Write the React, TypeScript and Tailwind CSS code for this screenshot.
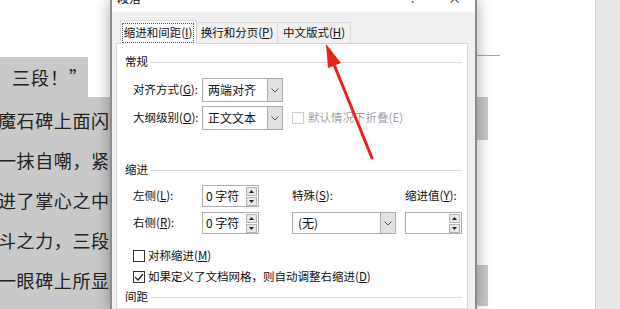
const U = ({ children }: { children: string }) => (
  <span className="underline underline-offset-[1px]">{children}</span>
);

const Chevron = () => (
  <svg width="8" height="5" viewBox="0 0 8 5">
    <path d="M0.5 0.5 L4 4 L7.5 0.5" fill="none" stroke="#555" strokeWidth="1" />
  </svg>
);

const Select = ({ value, className }: { value: string; className: string }) => (
  <div className={`flex h-full shrink-0 border border-[#adadad] bg-white ${className}`}>
    <div className="flex flex-1 items-center pl-[5px] text-[12px] text-[#111]">{value}</div>
    <div className="flex w-[15px] items-center justify-center border-l border-[#adadad] bg-[#e1e1e1]">
      <Chevron />
    </div>
  </div>
);

const SpinBtn = ({ up }: { up?: boolean }) => (
  <div className="flex h-[9px] w-[11px] items-center justify-center border border-[#b5b5b5] bg-[#e8e8e8]">
    <svg width="5" height="3" viewBox="0 0 5 3">
      <polygon points={up ? '0,3 2.5,0 5,3' : '0,0 2.5,3 5,0'} fill="#222" />
    </svg>
  </div>
);

const Spin = ({ value }: { value: string }) => (
  <div className="flex h-full w-[57px] shrink-0 border border-[#adadad] bg-white">
    <div className="flex flex-1 items-center pl-[3px] text-[12px] text-[#111] whitespace-nowrap">{value}</div>
    <div className="flex flex-col justify-center gap-[1px] pr-[1px]">
      <SpinBtn up />
      <SpinBtn />
    </div>
  </div>
);

const Section = ({ title, className }: { title: string; className: string }) => (
  <div className={`flex h-[16px] items-center ${className}`}>
    <span className="whitespace-nowrap">{title}</span>
    <div className="ml-[3px] h-px flex-1 bg-[#dcdcdc]" />
  </div>
);

const Check = ({ checked, disabled }: { checked?: boolean; disabled?: boolean }) => (
  <div
    className={`flex h-[12px] w-[12px] shrink-0 items-center justify-center border bg-white ${
      disabled ? 'border-[#cccccc]' : 'border-[#333]'
    }`}
  >
    {checked && (
      <svg width="10" height="8" viewBox="0 0 10 8">
        <path d="M1 4 L4 7 L9 1" fill="none" stroke="#222" strokeWidth="1.2" />
      </svg>
    )}
  </div>
);

const lines = ['魔石碑上面闪光，', '一抹自嘲，紧挨', '进了掌心之中，', '斗之力，三段！', '一眼碑上所显示'];

export default function App() {
  return (
    <div className="relative h-[309px] w-[620px] overflow-hidden bg-white font-['Noto_Sans_CJK_SC',sans-serif]">
      {/* document behind the dialog */}
      <div className="flex h-full text-[18px] tracking-[0.6px] text-[#222]">
        <div className="flex w-[112px] flex-col overflow-hidden">
          <div className="h-[57px]" />
          <div className="flex h-[40px]">
            <div className="flex w-[88px] items-center overflow-hidden bg-[#c9c9c9] pl-[12px] tracking-[1px] whitespace-nowrap">
              三段！”
            </div>
          </div>
          <div className="flex flex-1 flex-col bg-[#c9c9c9] pt-[3px]">
            {lines.map((t) => (
              <div key={t} className="-ml-[2px] flex h-[40px] items-center whitespace-nowrap">
                {t}
              </div>
            ))}
          </div>
        </div>
        <div className="w-[364px]" />
        <div className="flex w-[119px] flex-col">
          <div className="h-[55px]" />
          <div className="h-px w-[24px] bg-[#a8a8a8]" />
          <div className="h-[41px]" />
          <div className="flex h-[43px] w-[12px] items-center overflow-hidden bg-[#c9c9c9]">
            <span className="-ml-[14px]">，</span>
          </div>
          <div className="h-[125px]" />
          <div className="h-[41px] w-[12px] bg-[#c9c9c9]" />
        </div>
        <div className="flex-1 border-l border-[#d4d4d4] bg-[#e8e8e8]" />
      </div>

      {/* paragraph dialog */}
      <div className="absolute left-[110px] top-0 flex h-[309px] w-[367px] flex-col border-x-2 border-[#8c8c8c] bg-[#f0f0f0] text-[11.5px] text-[#111] shadow-[0_0_14px_rgba(0,0,0,0.35)]">
        <div className="flex h-[12px] items-start justify-between bg-white pl-[5px] pr-[14px] leading-none">
          <span className="-mt-[8px] text-[12px]">段落</span>
          <div className="-mt-[9px] flex gap-[32px] text-[13px] text-[#333]">
            <span>?</span>
            <span>×</span>
          </div>
        </div>

        <div className="flex h-[32px] items-end pl-[8px] whitespace-nowrap">
          <div className="relative z-10 flex h-[24px] w-[77px] items-center border-x border-t border-[#d9d9d9] bg-white pl-[1px]">
            <span className="flex h-[20px] w-[72px] items-center justify-center border border-dotted border-[#555]">
              缩进和间距(<U>I</U>)
            </span>
          </div>
          <div className="mb-[1px] flex h-[21px] w-[81px] items-center justify-center border-r border-t border-[#d9d9d9]">
            换行和分页(<U>P</U>)
          </div>
          <div className="mb-[1px] flex h-[21px] w-[73px] items-center justify-center border-r border-t border-[#d9d9d9]">
            中文版式(<U>H</U>)
          </div>
        </div>

        <div className="-mt-[1px] ml-[4px] mr-[7px] flex flex-1 flex-col border border-[#d9d9d9] bg-white pl-[8px] pr-[5px] whitespace-nowrap">
          <Section title="常规" className="mt-[10px]" />
          <div className="mt-[8px] flex h-[24px] items-center pl-[8px]">
            <span className="w-[69px] shrink-0">
              对齐方式(<U>G</U>):
            </span>
            <Select value="两端对齐" className="w-[81px]" />
          </div>
          <div className="mt-[4px] flex h-[24px] items-center pl-[8px]">
            <span className="w-[69px] shrink-0">
              大纲级别(<U>O</U>):
            </span>
            <Select value="正文文本" className="w-[81px]" />
            <div className="ml-[9px]">
              <Check disabled />
            </div>
            <span className="ml-[4px] text-[#a3a3a3]">默认情况下折叠(E)</span>
          </div>

          <Section title="缩进" className="mt-[32px]" />
          <div className="mt-[7px] flex h-[22px] items-center pl-[8px]">
            <span className="w-[69px] shrink-0">
              左侧(<U>L</U>):
            </span>
            <Spin value="0 字符" />
            <span className="ml-[33px] w-[113px] shrink-0">
              特殊(<U>S</U>):
            </span>
            <span>
              缩进值(<U>Y</U>):
            </span>
          </div>
          <div className="mt-[5px] flex h-[22px] items-center pl-[8px]">
            <span className="w-[69px] shrink-0">
              右侧(<U>R</U>):
            </span>
            <Spin value="0 字符" />
            <Select value="(无)" className="ml-[33px] w-[104px]" />
            <div className="ml-[9px] h-full">
              <Spin value="" />
            </div>
          </div>

          <div className="mt-[14px] flex h-[16px] items-center pl-[8px]">
            <Check />
            <span className="ml-[3px]">
              对称缩进(<U>M</U>)
            </span>
          </div>
          <div className="mt-[5px] flex h-[16px] items-center pl-[8px]">
            <Check checked />
            <span className="ml-[3px]">
              如果定义了文档网格，则自动调整右缩进(<U>D</U>)
            </span>
          </div>
          <Section title="间距" className="mt-[4px]" />
        </div>
      </div>

      {/* red annotation arrow */}
      <svg className="pointer-events-none absolute left-0 top-0" width="620" height="309" viewBox="0 0 620 309">
        <line x1="372" y1="158" x2="333" y2="62" stroke="#e8231d" strokeWidth="3" strokeLinecap="round" />
        <polygon points="326,44 341,63 328,68" fill="#e8231d" />
      </svg>
    </div>
  );
}
